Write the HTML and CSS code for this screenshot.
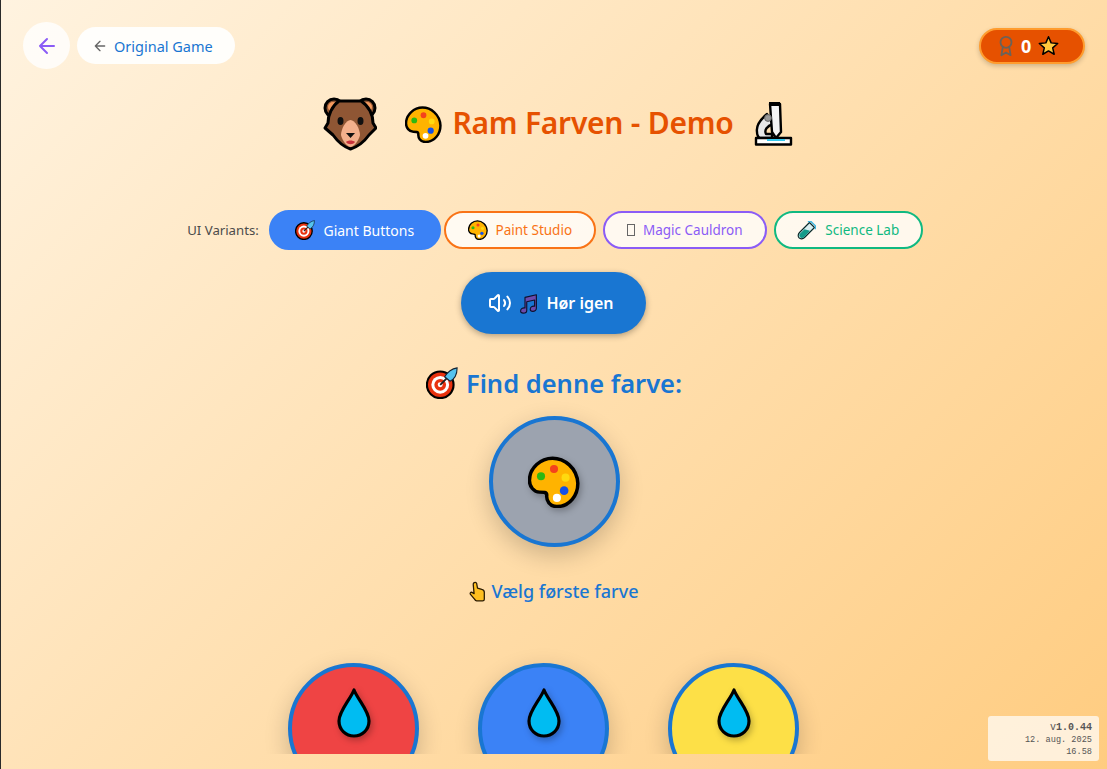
FILE: index.html
```html
<!DOCTYPE html>
<html>
<head>
	<meta charset="UTF-8">
	<title>Ram Farven - Demo</title>
	<link rel="stylesheet" href="styles.css">
</head>
<body>
	<svg class="defs" width="0" height="0">
		<symbol id="palette" viewBox="0 0 36 36">
			<path d="M17 1.500C25 1.500 34 8 34.500 19C34.500 27 29 35 20 35C15 35 12.500 31 13 27C13 25 11 25 8 25C4 25 1 21 1 17C1 8 9 1.500 17 1.500Z" fill="#ffb300" stroke="#000" stroke-width="2.400"/>
			<circle cx="9" cy="14" r="2.800" fill="#2eb811"/>
			<circle cx="18" cy="9" r="2.800" fill="#f4421c"/>
			<circle cx="26" cy="15" r="2.800" fill="#ffd90f"/>
			<circle cx="25" cy="24" r="3" fill="#1350e8"/>
			<circle cx="20" cy="29" r="2.800" fill="#fff"/>
		</symbol>
		<symbol id="target" viewBox="0 0 36 36">
			<circle cx="16" cy="20" r="15" fill="#e8320f" stroke="#000" stroke-width="2.400"/>
			<circle cx="16" cy="20" r="10" fill="#fff"/>
			<circle cx="16" cy="20" r="6.600" fill="#e8320f"/>
			<circle cx="16" cy="20" r="2.800" fill="#fff"/>
			<path d="M16 20L27 9" stroke="#222" stroke-width="2"/>
			<path d="M21 11C24 6 29 2 35 1C35 7 33 13 27 16Z" fill="#55c3ee" stroke="#123" stroke-width="1.200"/>
		</symbol>
		<symbol id="bear" viewBox="0 0 54 54">
			<circle cx="11" cy="11" r="9" fill="#8f5634" stroke="#000" stroke-width="3"/>
			<circle cx="43" cy="11" r="9" fill="#8f5634" stroke="#000" stroke-width="3"/>
			<circle cx="10" cy="10" r="5" fill="#f49a5e"/>
			<circle cx="44" cy="10" r="5" fill="#f49a5e"/>
			<path d="M16 4H38C46 9 50 18 50 26L53 31L46 38C41 45 34 50 27.500 52C21 50 15 45 10 38L2 31L5 26C5 18 9 9 16 4Z" fill="#8f5634" stroke="#000" stroke-width="3" stroke-linejoin="round"/>
			<path d="M27.500 23C32 23 37 32 37 38C36 43 31 50 27.500 50C24 50 19 43 18 38C18 32 23 23 27.500 23Z" fill="#f3b08c"/>
			<ellipse cx="17.500" cy="24" rx="3" ry="4" fill="#111"/>
			<ellipse cx="37.500" cy="24" rx="3" ry="4" fill="#111"/>
			<path d="M23 36H32L27.500 41Z" fill="#111"/>
			<path d="M23 45C25 43 30 43 32 45C30 48 25 48 23 45Z" fill="#c8323c"/>
		</symbol>
		<symbol id="microscope" viewBox="0 0 40 44">
			<path d="M14 12C8 17 3 24 4 30C4 33 5 35 7 36H19V32H13C11 28 14 24 20 22Z" fill="#e8e8e8" stroke="#000" stroke-width="2.400" stroke-linejoin="round"/>
			<path d="M17 2H27L28 30L23 36L19 30Z" fill="#f4f4f4" stroke="#000" stroke-width="2.400" stroke-linejoin="round"/>
			<rect x="16" y="0" width="11" height="4" fill="#000"/>
			<circle cx="15" cy="16" r="3.400" fill="#9a9a9a" stroke="#666" stroke-width="1"/>
			<path d="M3 36H38V42.500H3Z" fill="#fff" stroke="#000" stroke-width="2.400" stroke-linejoin="round"/>
			<path d="M14 38H32" stroke="#35c8ee" stroke-width="2"/>
		</symbol>
		<symbol id="notes" viewBox="0 0 24 24">
			<path d="M8 5L21 2V17.500C21 19.500 19 21 17 21C15 21 14 20 14 18.500C14 16.500 16 15 18 15L19 15V8L10 10V20C10 22 8 23 6 23C4 23 3 22 3 20.500C3 18.500 5 17 7 17H8Z" fill="#6b4bad" stroke="#10102c" stroke-width="1.300" stroke-linejoin="round"/>
		</symbol>
		<symbol id="hand" viewBox="0 0 20 24">
			<path d="M5.500 2C6.500 1 8.500 1 9 2.500L10 8L15 9.500C17 10 18 11 18 13V21C18 22 17 23 16 23H9C8 23 7 22 6.500 21L1.500 15C1 14 2 12.500 3.500 13L6 14.500L5 4C5 3 5 2.500 5.500 2Z" fill="#ffbf1f" stroke="#2a1a00" stroke-width="1.500" stroke-linejoin="round"/>
		</symbol>
		<symbol id="drop" viewBox="0 0 34 52">
			<path d="M17 3C21 13 32 24 32 34C32 43 25 49 17 49C9 49 2 43 2 34C2 24 13 13 17 3Z" fill="#00bcf2" stroke="#000" stroke-width="3.200" stroke-linejoin="round"/>
		</symbol>
		<symbol id="star" viewBox="0 0 24 24">
			<path d="M12 2L15 9L22.500 9.700L16.800 14.700L18.500 22L12 18.200L5.500 22L7.200 14.700L1.500 9.700L9 9Z" fill="#ffc83d" stroke="#000" stroke-width="1.700" stroke-linejoin="round"/>
		</symbol>
		<symbol id="tube" viewBox="0 0 24 24">
			<path d="M15 3L21 9L9 21C7 23 4 23 2.500 21.500C1 20 1 17 3 15Z" fill="#d8eef0" stroke="#0a2a2a" stroke-width="1.400" stroke-linejoin="round"/>
			<path d="M9 11L15.500 13L9 20C7 22 4.500 22 3.500 20.500C2.500 19 2.500 17 4 16Z" fill="#129b8a"/>
			<path d="M13 2H17L22 7V11" fill="none" stroke="#3fb6e0" stroke-width="1.600"/>
		</symbol>
		<symbol id="arrow" viewBox="0 0 24 24">
			<path d="M12 19L5 12L12 5M19 12H5" fill="none" stroke="currentColor" stroke-width="2" stroke-linecap="round" stroke-linejoin="round"/>
		</symbol>
	</svg>

	<div class="page">
		<div class="stage">
			<div class="topbar">
				<div class="nav">
					<a class="back-btn"><svg class="icon-24"><use href="#arrow"/></svg></a>
					<a class="orig-btn"><svg class="icon-16"><use href="#arrow"/></svg><span>Original Game</span></a>
				</div>
				<div class="score">
					<svg class="award" viewBox="0 0 24 24" fill="none" stroke="currentColor" stroke-width="2" stroke-linecap="round" stroke-linejoin="round">
						<circle cx="12" cy="8" r="6"/>
						<path d="M15.477 12.89L17 22L12 19L7 22L8.523 12.89"/>
					</svg>
					<span class="score-num">0</span>
					<svg class="score-star"><use href="#star"/></svg>
				</div>
			</div>

			<div class="title-row">
				<svg class="title-bear"><use href="#bear"/></svg>
				<svg class="title-palette"><use href="#palette"/></svg>
				<h1>Ram Farven - Demo</h1>
				<svg class="title-scope"><use href="#microscope"/></svg>
			</div>

			<div class="variants">
				<span class="variants-label">UI Variants:</span>
				<a class="variant variant-giant"><svg class="v-icon"><use href="#target"/></svg>Giant Buttons</a>
				<a class="variant variant-paint"><svg class="v-icon"><use href="#palette"/></svg>Paint Studio</a>
				<a class="variant variant-magic"><i class="tofu"></i>Magic Cauldron</a>
				<a class="variant variant-science"><svg class="v-icon"><use href="#tube"/></svg>Science Lab</a>
			</div>

			<button class="listen">
				<svg class="icon-24" viewBox="0 0 24 24" fill="none" stroke="currentColor" stroke-width="2" stroke-linecap="round" stroke-linejoin="round">
					<path d="M11 4.702a.705.705 0 0 0-1.203-.498L6.413 7.587A1.4 1.4 0 0 1 5.416 8H3a1 1 0 0 0-1 1v6a1 1 0 0 0 1 1h2.416a1.4 1.4 0 0 1 .997.413l3.383 3.384A.705.705 0 0 0 11 19.298z"/>
					<path d="M16 9a5 5 0 0 1 0 6"/>
					<path d="M19.364 18.364a9 9 0 0 0 0-12.728"/>
				</svg>
				<svg class="notes"><use href="#notes"/></svg>
				<span>Hør igen</span>
			</button>

			<h2 class="find"><svg class="find-icon"><use href="#target"/></svg>Find denne farve:</h2>

			<div class="swatch swatch-target"><svg class="swatch-palette"><use href="#palette"/></svg></div>

			<p class="hint"><svg class="hint-hand"><use href="#hand"/></svg>Vælg første farve</p>

			<div class="choices">
				<div class="swatch swatch-red"><svg class="drop"><use href="#drop"/></svg></div>
				<div class="swatch swatch-blue"><svg class="drop"><use href="#drop"/></svg></div>
				<div class="swatch swatch-yellow"><svg class="drop"><use href="#drop"/></svg></div>
			</div>
		</div>

		<div class="version">
			<div class="version-num">v<b>1.0.44</b></div>
			<div>12. aug. 2025</div>
			<div>16.58</div>
		</div>
	</div>
</body>
</html>
```

FILE: styles.css
```css
* {
    box-sizing: border-box;
}
html, body {
    margin: 0;
    height: 100%;
}
body {
    font-family: "Noto Sans", "Open Sans", sans-serif;
    overflow: hidden;
}
.defs {
    position: absolute;
}
.page {
    position: relative;
    height: 769px;
    border-left: 1px solid #2a2a2a;
    background: linear-gradient(135deg, #fff3e0 0%, #ffcc80 100%);
}
.stage {
    height: 754px;
    overflow: hidden;
    display: flex;
    flex-direction: column;
    align-items: center;
}
.stage > * {
    flex: none;
}

/* top bar */
.topbar {
    align-self: stretch;
    display: flex;
    justify-content: space-between;
    align-items: center;
    padding: 22px 22px 0;
}
.nav {
    display: flex;
    align-items: center;
    gap: 7px;
}
.back-btn {
    width: 47px;
    height: 47px;
    border-radius: 50%;
    background: rgba(255, 255, 255, .8);
    color: #8b5cf6;
    display: flex;
    align-items: center;
    justify-content: center;
}
.icon-24 {
    width: 24px;
    height: 24px;
}
.icon-16 {
    width: 16px;
    height: 16px;
    color: #666;
}
.orig-btn {
    height: 37px;
    width: 158px;
    border-radius: 19px;
    background: rgba(255, 255, 255, .9);
    color: #1976d2;
    font-size: 14.500px;
    display: flex;
    align-items: center;
    padding-left: 15px;
    gap: 6px;
}
.score {
    width: 106px;
    height: 36px;
    border-radius: 18px;
    background: #e65100;
    border: 2px solid #ff9c2e;
    box-shadow: 0 2px 5px rgba(0, 0, 0, .2);
    display: flex;
    align-items: center;
    padding-left: 14px;
    color: #fff;
}
.award {
    width: 22px;
    height: 22px;
    color: #6b6258;
    margin-right: 4px;
}
.score-num {
    font-size: 18px;
    font-weight: 700;
}
.score-star {
    width: 21px;
    height: 21px;
    margin-left: 7px;
}

/* title */
.title-row {
    display: flex;
    align-items: center;
    height: 54px;
    margin-top: 28px;
    padding-left: 8px;
}
.title-bear {
    width: 54px;
    height: 54px;
}
.title-palette {
    width: 37px;
    height: 37px;
    margin-left: 28px;
}
.title-row h1 {
    margin: -4px 19px 0 10px;
    font-size: 30px;
    letter-spacing: -.25px;
    font-weight: 600;
    color: #e65100;
    white-space: nowrap;
}
.title-scope {
    width: 40px;
    height: 44px;
}

/* variants */
.variants {
    display: flex;
    align-items: center;
    margin: 59px 0 0 2px;
    gap: 7px;
}
.variants-label {
    font-size: 13.200px;
    color: #4b4b4b;
    margin-right: 3px;
}
.variant {
    height: 38px;
    border-radius: 19px;
    border: 2px solid;
    background: rgba(255, 255, 255, .8);
    font-size: 13.500px;
    display: flex;
    align-items: center;
    justify-content: center;
    gap: 8px;
}
.variant-giant {
    width: 172px;
    height: 40px;
    border-radius: 20px;
    background: #3b82f6;
    border-color: #3b82f6;
    color: #fff;
    font-size: 14px;
    margin-right: -4px;
}
.variant-paint {
    width: 152px;
    border-color: #f97316;
    color: #f97316;
}
.variant-magic {
    width: 164px;
    border-color: #8b5cf6;
    color: #8b5cf6;
}
.variant-science {
    width: 149px;
    border-color: #10b981;
    color: #10b981;
}
.v-icon {
    width: 20px;
    height: 20px;
}
.tofu {
    width: 8px;
    height: 12px;
    border: 1px solid #666;
}

/* listen button */
.listen {
    margin: 22px 2px 0 0;
    width: 185px;
    height: 62px;
    padding: 0 4px 0 0;
    border: 0;
    border-radius: 31px;
    background: #1976d2;
    color: #fff;
    font-family: inherit;
    font-size: 16px;
    font-weight: 600;
    box-shadow: 0 2px 6px rgba(0, 0, 0, .3);
    display: flex;
    align-items: center;
    justify-content: center;
}
.notes {
    width: 21px;
    height: 21px;
    margin: 0 7px 0 6px;
}

/* prompt */
.find {
    margin: 31px 0 0;
    height: 36px;
    font-size: 25.500px;
    font-weight: 600;
    color: #1976d2;
    display: flex;
    align-items: center;
    gap: 8px;
}
.find-icon {
    width: 32px;
    height: 32px;
}
.swatch {
    width: 131px;
    height: 131px;
    flex: none;
    border-radius: 50%;
    border: 4px solid #1976d2;
    box-shadow: 0 8px 24px rgba(0, 0, 0, .2);
    display: flex;
    align-items: center;
    justify-content: center;
}
.swatch-target {
    margin-top: 15px;
    background: #9ca3af;
}
.swatch-palette {
    width: 52px;
    height: 52px;
    filter: drop-shadow(2px 3px 3px rgba(0, 0, 0, .25));
}
.hint {
    margin: 30px 0 0;
    font-size: 18px;
    font-weight: 500;
    color: #1976d2;
    display: flex;
    align-items: center;
    gap: 5px;
    height: 28px;
}
.hint-hand {
    width: 17px;
    height: 21px;
}

/* colour choices */
.choices {
    display: flex;
    gap: 59px;
    margin: 58px 21px 0 0;
}
.drop {
    width: 34px;
    height: 52px;
    margin-bottom: 32px;
    filter: drop-shadow(2px 3px 3px rgba(0, 0, 0, .25));
}
.swatch-red {
    background: #ef4444;
}
.swatch-blue {
    background: #3b82f6;
}
.swatch-yellow {
    background: #fde047;
}

/* build stamp */
.version {
    position: absolute;
    right: 8px;
    bottom: 8px;
    width: 111px;
    height: 45px;
    padding: 5px 7px;
    border-radius: 3px;
    background: rgba(255, 255, 255, .7);
    font-family: "Liberation Mono", "DejaVu Sans Mono", monospace;
    font-size: 8.600px;
    line-height: 12px;
    color: #555;
    text-align: right;
}
.version-num {
    font-size: 10px;
    line-height: 13px;
}
```
